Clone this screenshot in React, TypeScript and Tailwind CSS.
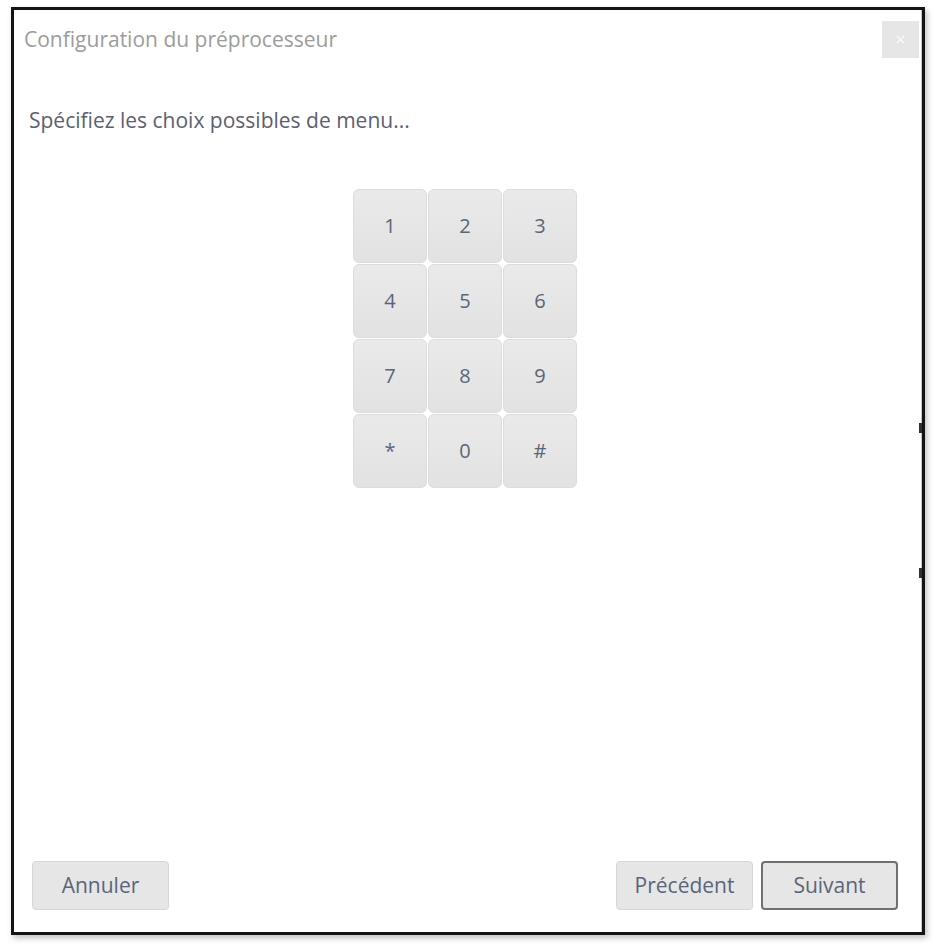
import React from 'react';

const keys = ['1', '2', '3', '4', '5', '6', '7', '8', '9', '*', '0', '#'];

const font = { fontFamily: '"Open Sans", "Noto Sans", sans-serif' };

const Keypad: React.FC = () => (
  <div className="grid grid-cols-[74px_74px_74px] gap-px">
    {keys.map((k) => (
      <button
        key={k}
        type="button"
        className="h-[74px] rounded-[6px] border border-[#dcdcdc] bg-gradient-to-b from-[#eaeaea] to-[#e2e2e2] text-[20px] text-[#5a6579] flex items-center justify-center"
      >
        {k}
      </button>
    ))}
  </div>
);

const FooterButton: React.FC<{ label: string; active?: boolean }> = ({ label, active }) => (
  <button
    type="button"
    className={
      active
        ? 'w-[137px] h-[49px] rounded-[4px] border-2 border-[#707070] bg-[#e6e6e6] text-[21px] text-[#5a6579]'
        : 'w-[137px] h-[49px] rounded-[4px] border border-[#d6d6d6] bg-[#e6e6e6] text-[21px] text-[#5a6579]'
    }
  >
    {label}
  </button>
);

export default function App() {
  return (
    <div className="w-[937px] h-[949px] bg-white pt-[7px] pl-[11px]" style={font}>
      <div className="relative w-[914px] h-[928px] border-[3px] border-[#141414] bg-white shadow-[2px_3px_6px_rgba(0,0,0,0.25)] flex flex-col">
        {/* window edge behind the dialog */}
        <div className="absolute right-0 top-0 bottom-0 w-px bg-[#c8c8c8]" />
        <div className="absolute right-0 top-[413px] w-[3px] h-[10px] bg-[#2b3040]" />
        <div className="absolute right-0 top-[558px] w-[3px] h-[10px] bg-[#2b3040]" />

        <div className="flex items-center justify-between pt-[11px] pr-[3px] pl-[10px]">
          <span className="text-[21px] text-[#9c9c9c]">Configuration du préprocesseur</span>
          <button
            type="button"
            className="w-[37px] h-[37px] bg-[#e6e6e6] text-[18px] text-[#fafafa] flex items-center justify-center"
          >
            ×
          </button>
        </div>

        <div className="pl-[15px] pt-[47px] text-[21px] text-[#5b6072]">
          Spécifiez les choix possibles de menu...
        </div>

        <div className="flex-1 flex justify-center pt-[52px] pr-[6px]">
          <div>
            <Keypad />
          </div>
        </div>

        <div className="flex items-center justify-between pl-[18px] pr-[24px] pb-[22px]">
          <FooterButton label="Annuler" />
          <div className="flex gap-[8px]">
            <FooterButton label="Précédent" />
            <FooterButton label="Suivant" active />
          </div>
        </div>
      </div>
    </div>
  );
}
